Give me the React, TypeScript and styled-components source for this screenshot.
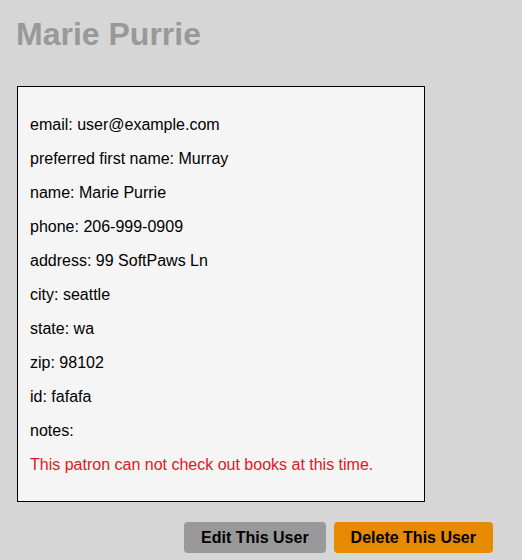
import React from "react";
import styled, { createGlobalStyle } from "styled-components";

const Global = createGlobalStyle`
  html, body { margin: 0; padding: 0; background: #d6d6d6; }
  body { font-family: "Liberation Sans", Arial, Helvetica, sans-serif; color: #000; }
`;

const Page = styled.div`
  padding: 16px 29px 0 16px;
  min-height: 560px;
  box-sizing: border-box;
`;

const Title = styled.h1`
  margin: 0 0 33px 0;
  font-size: 32px;
  font-weight: bold;
  line-height: 37px;
  color: #999999;
`;

const Card = styled.div`
  margin-left: 1px;
  width: 408px;
  height: 416px;
  box-sizing: border-box;
  border: 1px solid #000;
  background: #f5f5f5;
  padding: 13px 12px 11px 12px;
`;

const Field = styled.p<{ $alert?: boolean }>`
  margin: 16px 0;
  font-size: 16px;
  line-height: 18px;
  color: ${(p) => (p.$alert ? "#e3161f" : "#000")};
`;

const Actions = styled.div`
  display: flex;
  justify-content: flex-end;
  gap: 8px;
  margin-top: 20px;
`;

const Button = styled.button<{ $variant: "edit" | "delete" }>`
  height: 31px;
  padding: 0 17px;
  border: none;
  border-radius: 4px;
  font-family: inherit;
  font-size: 16px;
  font-weight: bold;
  color: #000;
  background: ${(p) => (p.$variant === "edit" ? "#999999" : "#e68a00")};
  cursor: pointer;
`;

const fields: [string, string][] = [
  ["email", "user@example.com"],
  ["preferred first name", "Murray"],
  ["name", "Marie Purrie"],
  ["phone", "206-999-0909"],
  ["address", "99 SoftPaws Ln"],
  ["city", "seattle"],
  ["state", "wa"],
  ["zip", "98102"],
  ["id", "fafafa"],
  ["notes", ""],
];

export default function App() {
  return (
    <>
      <Global />
      <Page>
        <Title>Marie Purrie</Title>
        <Card>
          {fields.map(([k, v]) => (
            <Field key={k}>
              {k}: {v}
            </Field>
          ))}
          <Field $alert>This patron can not check out books at this time.</Field>
        </Card>
        <Actions>
          <Button $variant="edit">Edit This User</Button>
          <Button $variant="delete">Delete This User</Button>
        </Actions>
      </Page>
    </>
  );
}
